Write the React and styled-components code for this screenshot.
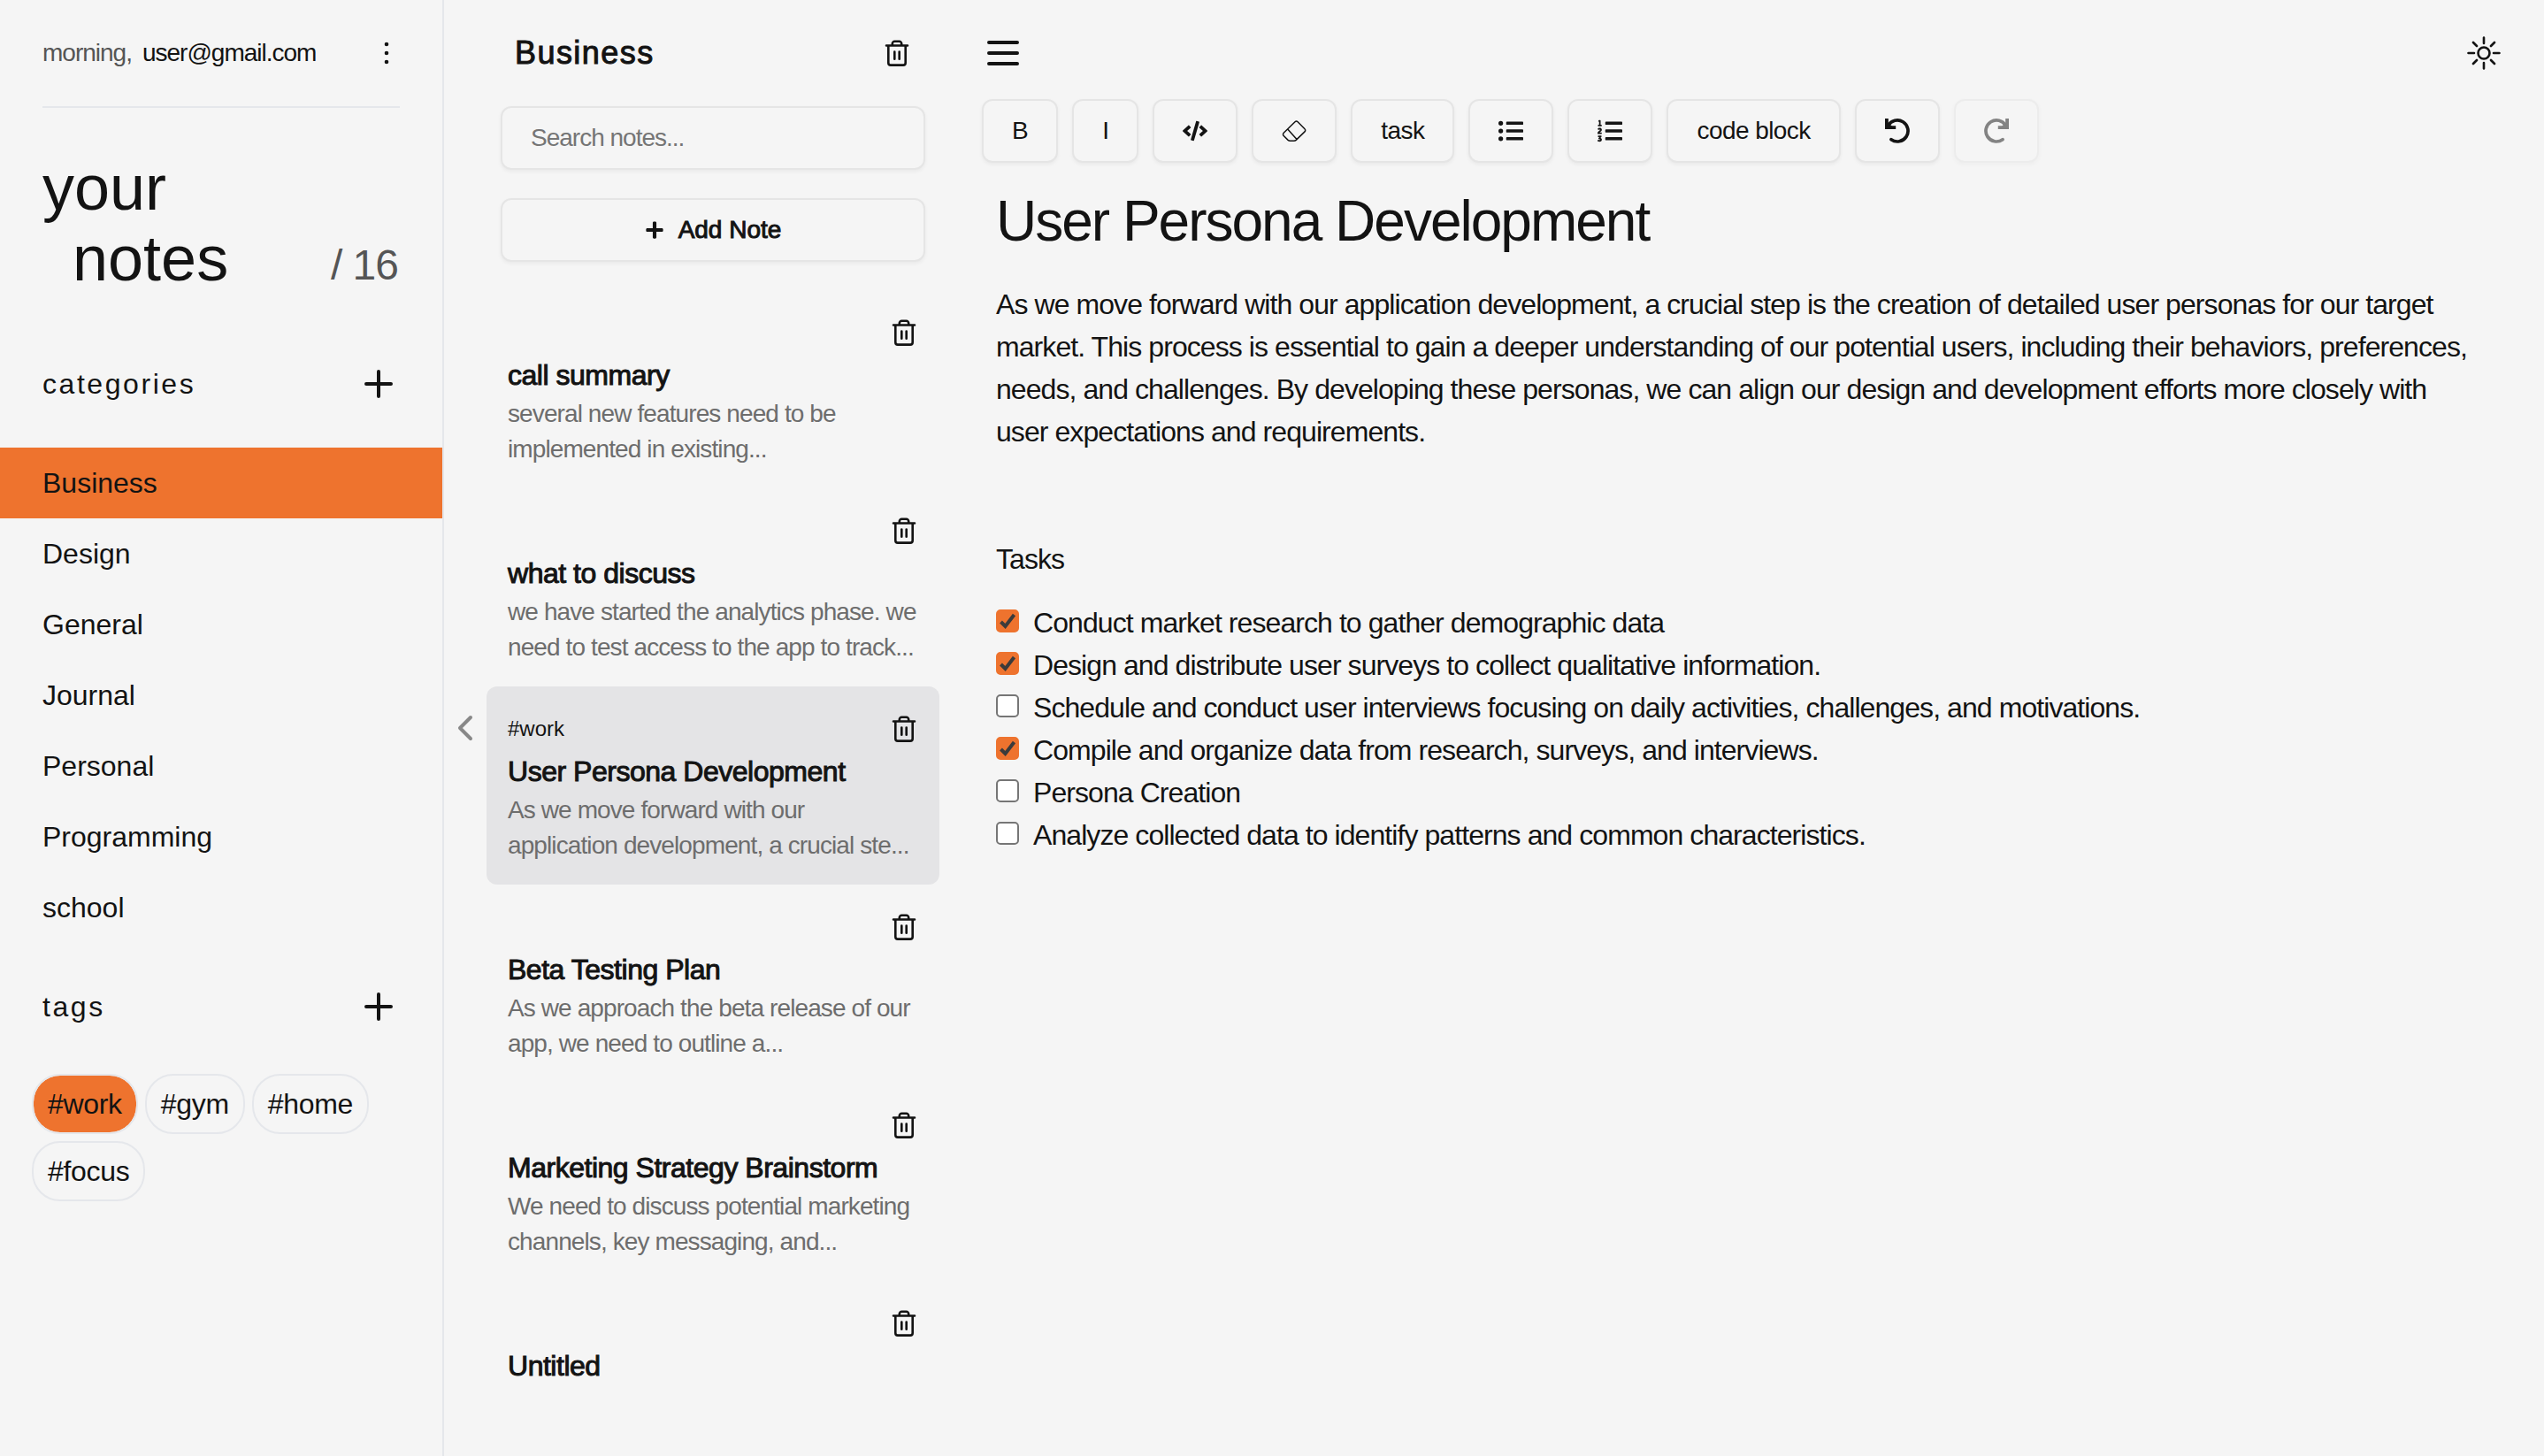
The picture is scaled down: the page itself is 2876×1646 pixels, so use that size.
import React, { useState } from "react";
import styled, { createGlobalStyle, css } from "styled-components";
import { FaCode, FaListUl, FaListOl, FaPlus } from "react-icons/fa";

const ink = "#131313";
const paper = "#f5f5f5";
const accent = "#ee732e";
const line = "#e5e7eb";
const edge = "#e5e5e5";

const GlobalStyle = createGlobalStyle`
  *, *::before, *::after { box-sizing: border-box; }
  body {
    margin: 0;
    background: ${paper};
    color: ${ink};
    font-family: "Liberation Sans", Arial, Helvetica, sans-serif;
    font-size: 32px;
    line-height: 48px;
  }
  h1, h2, h3, p, ul { margin: 0; padding: 0; font-weight: 400; }
  ul { list-style: none; }
  button, input { font: inherit; color: inherit; }
`;

const Page = styled.div`
  display: grid;
  grid-template-columns: 502px 608px minmax(0, 1fr);
  height: 100vh;
  overflow: hidden;
`;

const IconButton = styled.button`
  display: flex;
  flex: none;
  align-items: center;
  justify-content: center;
  padding: 0;
  border: 0;
  background: none;
  cursor: pointer;
`;

const Sidebar = styled.aside`
  border-right: 2px solid ${line};
  overflow: hidden;
`;

const Account = styled.div`
  display: flex;
  align-items: center;
  gap: 12px;
  height: 122px;
  margin: 0 48px;
  border-bottom: 2px solid ${line};
  font-size: 28px;
  letter-spacing: -1px;

  ${IconButton} { margin-left: auto; }
`;

const Greeting = styled.span`
  color: #555555;
`;

const Heading = styled.div`
  display: flex;
  align-items: flex-end;
  justify-content: space-between;
  padding: 50px 50px 78px 48px;
`;

const BigTitle = styled.h1`
  font-size: 72px;
  line-height: 80px;

  span { display: block; }
  span + span { padding-left: 34px; }
`;

const Count = styled.span`
  color: #555555;
  font-size: 48px;
  line-height: 64px;
  letter-spacing: -1px;
`;

const SectionBar = styled.div`
  display: flex;
  align-items: center;
  justify-content: space-between;
  padding: 0 48px;
`;

const SectionTitle = styled.h2`
  font-size: 32px;
  letter-spacing: 0.08em;
`;

const CategoryList = styled.ul`
  padding: 48px 0;
`;

const CategoryButton = styled.button`
  display: block;
  width: 100%;
  padding: 16px 48px;
  border: 0;
  background: ${(p) => (p.$active ? accent : "none")};
  text-align: left;
  cursor: pointer;
`;

const TagList = styled.ul`
  display: flex;
  flex-wrap: wrap;
  gap: 8px;
  padding: 52px 36px;
`;

const TagButton = styled.button`
  padding: 8px 16px;
  border: 2px solid ${line};
  border-radius: 32px;
  background: ${(p) => (p.$active ? accent : "none")};
  background-clip: padding-box;
  letter-spacing: -0.01em;
  cursor: pointer;
`;

const NotesPane = styled.section`
  display: grid;
  grid-template-columns: 48px minmax(0, 1fr);
  align-items: center;
  padding-right: 48px;
  min-height: 0;
`;

const NotesColumn = styled.div`
  align-self: stretch;
  min-height: 0;
  overflow: hidden;
`;

const NotesHeader = styled.div`
  display: flex;
  align-items: center;
  justify-content: space-between;
  height: 120px;
  padding: 0 32px;
`;

const NotesTitle = styled.h2`
  font-size: 36px;
  letter-spacing: 0.04em;
  -webkit-text-stroke: 1px ${ink};
`;

const control = css`
  border: 2px solid ${edge};
  border-radius: 12px;
  background: ${paper};
  box-shadow: 0 2px 4px rgba(0, 0, 0, 0.05);
`;

const NotesTools = styled.div`
  display: grid;
  gap: 32px;
  padding: 0 16px 32px;
`;

const SearchInput = styled.input`
  ${control}
  width: 100%;
  height: 72px;
  padding: 0 32px;
  font-size: 28px;
  letter-spacing: -1px;

  &::placeholder { color: #757575; opacity: 1; }
`;

const AddButton = styled.button`
  ${control}
  display: flex;
  align-items: center;
  justify-content: center;
  gap: 16px;
  height: 72px;
  font-size: 28px;
  cursor: pointer;

  span { -webkit-text-stroke: 1px ${ink}; }
`;

const NoteCard = styled.li`
  padding: 24px;
  border-radius: 12px;
  background: ${(p) => (p.$active ? "#e4e4e6" : "none")};
`;

const NoteTop = styled.div`
  display: flex;
  align-items: center;
  justify-content: space-between;
  height: 48px;
  font-size: 24px;
`;

const NoteTitle = styled.h3`
  font-size: 32px;
  letter-spacing: -0.015em;
  -webkit-text-stroke: 1px ${ink};
`;

const NotePreview = styled.p`
  color: #6d6d6d;
  font-size: 28px;
  line-height: 40px;
  letter-spacing: -0.032em;
`;

const Editor = styled.main`
  min-width: 0;
  padding-right: 44px;
`;

const EditorHeader = styled.header`
  display: flex;
  align-items: center;
  justify-content: space-between;
  height: 112px;
  padding-top: 8px;
`;

const Toolbar = styled.div`
  display: flex;
  flex-wrap: wrap;
  gap: 16px;
`;

const ToolButton = styled.button`
  ${control}
  display: flex;
  align-items: center;
  height: 72px;
  padding: 0 32px;
  font-size: 28px;
  letter-spacing: -0.02em;
  cursor: pointer;

  &:disabled { opacity: 0.5; cursor: default; }
`;

const Document = styled.article`
  padding: 26px 36px 48px 16px;
  letter-spacing: -0.029em;
`;

const DocTitle = styled.h1`
  margin-bottom: 30px;
  font-size: 64px;
  line-height: 80px;
  letter-spacing: -2px;
`;

const Paragraph = styled.p`
  margin-bottom: 96px;
`;

const TaskHeading = styled.p`
  margin-bottom: 24px;
`;

const TaskRow = styled.li`
  label {
    display: flex;
    align-items: baseline;
    gap: 16px;
  }
`;

const tick = `url("data:image/svg+xml,%3Csvg xmlns='http://www.w3.org/2000/svg' viewBox='0 0 26 26'%3E%3Cpath d='M5.5 14l5 5L20.500 6' fill='none' stroke='%233b3b3b' stroke-width='4'/%3E%3C/svg%3E")`;

const Checkbox = styled.input`
  appearance: none;
  flex: none;
  width: 26px;
  height: 26px;
  margin: 0;
  border: 2px solid #767676;
  border-radius: 5px;
  background: #ffffff;

  &:checked {
    border-color: ${accent};
    background: ${accent} ${tick} center / 26px 26px no-repeat;
  }
`;

const Stroke = ({ size = 48, box = 24, width = 2, children }) => (
  <svg
    width={size}
    height={size}
    viewBox={`0 0 ${box} ${box}`}
    fill="none"
    stroke="currentColor"
    strokeWidth={width}
    strokeLinecap="round"
    strokeLinejoin="round"
    aria-hidden="true"
  >
    {children}
  </svg>
);

const PlusIcon = () => (
  <Stroke>
    <path d="M5 12h14M12 5v14" />
  </Stroke>
);

const MenuIcon = () => (
  <Stroke>
    <path d="M4 6h16M4 12h16M4 18h16" />
  </Stroke>
);

const TrashIcon = () => (
  <Stroke size={32} box={32} width={2.6}>
    <path d="M4 7.500h24M10.800 7.500V5.400a2.600 2.600 0 0 1 2.600-2.600h5.200a2.600 2.600 0 0 1 2.600 2.600v2.100M6.300 7.500v19.500a2.600 2.600 0 0 0 2.600 2.600h14.200a2.600 2.600 0 0 0 2.600-2.600V7.500M13.300 14.500v8.200M18.700 14.500v8.200" />
  </Stroke>
);

const EraserIcon = () => (
  <Stroke size={28} box={28} width={1.5}>
    <path d="M15 3.800a2.200 2.200 0 0 1 3.100 0L26 11.700a2.200 2.200 0 0 1 0 3.200l-9.800 9.500q-1 .9-2.400.9H9.500q-1.400 0-2.400-.9L2.200 19.500a2.200 2.200 0 0 1 0-3.200zM6.700 12L17 23.500" />
  </Stroke>
);

const UndoIcon = ({ mirrored }) => (
  <svg width="28" height="28" viewBox="0 0 28 28" aria-hidden="true">
    <g transform={mirrored ? "translate(28 0) scale(-1 1)" : undefined}>
      <path d="M3.600 8A12 12 0 1 1 7 23.700" fill="none" stroke="currentColor" strokeWidth="3.700" strokeLinecap="round" />
      <path d="M0 0h3.800v6l4 2.200h4.400V12H0z" fill="currentColor" />
    </g>
  </svg>
);

const KebabIcon = () => (
  <svg width="30" height="30" viewBox="0 0 30 30" fill="currentColor" aria-hidden="true">
    <circle cx="15" cy="5" r="2.300" />
    <circle cx="15" cy="15" r="2.300" />
    <circle cx="15" cy="25" r="2.300" />
  </svg>
);

const SunIcon = () => (
  <Stroke size={48} box={48} width={2.6}>
    <circle cx="24" cy="24" r="6.500" />
    <path d="M24 13V6.500M24 35v6.500M13 24H6.500M35 24h6.500M16 16l-4-4M32 32l4 4M32 16l4-4M16 32l-4 4" />
  </Stroke>
);

const ChevronIcon = () => (
  <svg width="20" height="32" viewBox="0 0 20 32" fill="none" stroke="#888888" strokeWidth="4" strokeLinecap="round" strokeLinejoin="round" aria-hidden="true">
    <path d="M16 4L4 16l12 12" />
  </svg>
);

const categories = ["Business", "Design", "General", "Journal", "Personal", "Programming", "school"];
const tags = ["#work", "#gym", "#home", "#focus"];

const notes = [
  { title: "call summary", preview: "several new features need to be implemented in existing..." },
  { title: "what to discuss", preview: "we have started the analytics phase. we need to test access to the app to track..." },
  { title: "User Persona Development", tag: "#work", preview: "As we move forward with our application development, a crucial ste..." },
  { title: "Beta Testing Plan", preview: "As we approach the beta release of our app, we need to outline a..." },
  { title: "Marketing Strategy Brainstorm", preview: "We need to discuss potential marketing channels, key messaging, and..." },
  { title: "Untitled" },
];

const initialTasks = [
  { text: "Conduct market research to gather demographic data", done: true },
  { text: "Design and distribute user surveys to collect qualitative information.", done: true },
  { text: "Schedule and conduct user interviews focusing on daily activities, challenges, and motivations.", done: false },
  { text: "Compile and organize data from research, surveys, and interviews.", done: true },
  { text: "Persona Creation", done: false },
  { text: "Analyze collected data to identify patterns and common characteristics.", done: false },
];

export default function App() {
  const [category, setCategory] = useState("Business");
  const [tag, setTag] = useState("#work");
  const [tasks, setTasks] = useState(initialTasks);

  const toggle = (index) =>
    setTasks(tasks.map((t, i) => (i === index ? { ...t, done: !t.done } : t)));

  return (
    <>
      <GlobalStyle />
      <Page>
        <Sidebar>
          <Account>
            <Greeting>morning,</Greeting>
            <span>user@gmail.com</span>
            <IconButton aria-label="Account menu"><KebabIcon /></IconButton>
          </Account>
          <Heading>
            <BigTitle>
              <span>your</span>
              <span>notes</span>
            </BigTitle>
            <Count>/ 16</Count>
          </Heading>
          <SectionBar>
            <SectionTitle>categories</SectionTitle>
            <IconButton aria-label="Add category"><PlusIcon /></IconButton>
          </SectionBar>
          <CategoryList>
            {categories.map((name) => (
              <li key={name}>
                <CategoryButton $active={name === category} onClick={() => setCategory(name)}>
                  {name}
                </CategoryButton>
              </li>
            ))}
          </CategoryList>
          <SectionBar>
            <SectionTitle>tags</SectionTitle>
            <IconButton aria-label="Add tag"><PlusIcon /></IconButton>
          </SectionBar>
          <TagList>
            {tags.map((name) => (
              <li key={name}>
                <TagButton $active={name === tag} onClick={() => setTag(name)}>{name}</TagButton>
              </li>
            ))}
          </TagList>
        </Sidebar>

        <NotesPane>
          <IconButton aria-label="Collapse sidebar"><ChevronIcon /></IconButton>
          <NotesColumn>
            <NotesHeader>
              <NotesTitle>{category}</NotesTitle>
              <IconButton aria-label="Delete category"><TrashIcon /></IconButton>
            </NotesHeader>
            <NotesTools>
              <SearchInput type="search" aria-label="Search notes" placeholder="Search notes..." />
              <AddButton>
                <FaPlus size={22} />
                <span>Add Note</span>
              </AddButton>
            </NotesTools>
            <ul>
              {notes.map((note) => (
                <NoteCard key={note.title} $active={note.title === "User Persona Development"}>
                  <NoteTop>
                    <span>{note.tag}</span>
                    <IconButton aria-label={`Delete ${note.title}`}><TrashIcon /></IconButton>
                  </NoteTop>
                  <NoteTitle>{note.title}</NoteTitle>
                  {note.preview && <NotePreview>{note.preview}</NotePreview>}
                </NoteCard>
              ))}
            </ul>
          </NotesColumn>
        </NotesPane>

        <Editor>
          <EditorHeader>
            <IconButton aria-label="Toggle menu"><MenuIcon /></IconButton>
            <IconButton aria-label="Switch theme"><SunIcon /></IconButton>
          </EditorHeader>
          <Toolbar role="toolbar" aria-label="Formatting">
            <ToolButton>B</ToolButton>
            <ToolButton>I</ToolButton>
            <ToolButton aria-label="Code"><FaCode size={28} /></ToolButton>
            <ToolButton aria-label="Clear formatting"><EraserIcon /></ToolButton>
            <ToolButton>task</ToolButton>
            <ToolButton aria-label="Bullet list"><FaListUl size={28} /></ToolButton>
            <ToolButton aria-label="Numbered list"><FaListOl size={28} /></ToolButton>
            <ToolButton>code block</ToolButton>
            <ToolButton aria-label="Undo"><UndoIcon /></ToolButton>
            <ToolButton aria-label="Redo" disabled><UndoIcon mirrored /></ToolButton>
          </Toolbar>
          <Document>
            <DocTitle>User Persona Development</DocTitle>
            <Paragraph>
              As we move forward with our application development, a crucial step is the creation of
              detailed user personas for our target market. This process is essential to gain a deeper
              understanding of our potential users, including their behaviors, preferences, needs, and
              challenges. By developing these personas, we can align our design and development efforts
              more closely with user expectations and requirements.
            </Paragraph>
            <TaskHeading>Tasks</TaskHeading>
            <ul>
              {tasks.map((t, i) => (
                <TaskRow key={t.text}>
                  <label>
                    <Checkbox type="checkbox" checked={t.done} onChange={() => toggle(i)} />
                    <span>{t.text}</span>
                  </label>
                </TaskRow>
              ))}
            </ul>
          </Document>
        </Editor>
      </Page>
    </>
  );
}
